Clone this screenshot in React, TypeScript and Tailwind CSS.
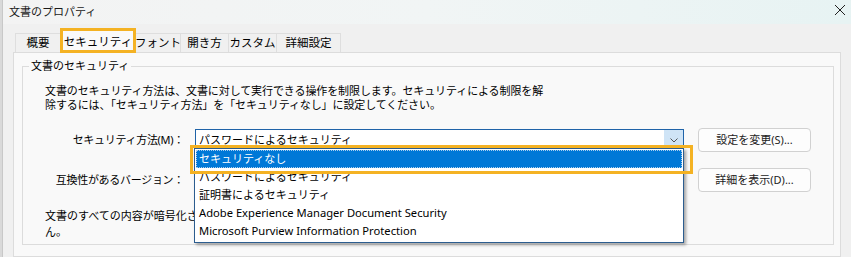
import React from "react";

const FONT = { fontFamily: '"Noto Sans", "Noto Sans CJK JP", sans-serif' };

function Tab({ label, w, selected }: { label: string; w: number; selected?: boolean }) {
  if (selected) {
    return (
      <div
        className="h-[24px] -mb-[1px] -ml-[1px] flex items-center justify-center whitespace-nowrap border border-b-0 border-[#d9d9d9] bg-[#f9f9f9] text-[11.5px] text-black relative z-10"
        style={{ width: w }}
      >
        {label}
      </div>
    );
  }
  return (
    <div
      className="h-[19px] flex items-center justify-center whitespace-nowrap border border-b-0 border-[#dedede] bg-[#f0f0f0] text-[11.5px] text-black -ml-[1px]"
      style={{ width: w }}
    >
      {label}
    </div>
  );
}

function Button({ label }: { label: string }) {
  return (
    <div className="w-[113px] h-[24px] ml-[14px] flex items-center justify-center rounded-[4px] border border-[#d1d1d1] bg-[#fdfdfd] text-[11px] text-[#1b1b1b]">
      {label}
    </div>
  );
}

export default function App() {
  return (
    <div
      className="relative w-[851px] h-[257px] overflow-hidden bg-[#f0f0f0] flex text-black"
      style={FONT}
    >
      {/* left edge of background window */}
      <div className="w-[3px] h-full bg-[#d9d9d9] border-r border-[#c8c8c8]" />

      <div className="flex-1 flex flex-col">
        {/* title bar */}
        <div className="h-[24px] flex items-center justify-between bg-linear-to-r from-[#f3f3f3] via-[#f1f5f5] to-[#e7f3f3] pl-[6px] pr-[5px]">
          <span className="text-[11px] text-[#1a1a1a]">文書のプロパティ</span>
          <svg width="12" height="12" viewBox="0 0 12 12" className="mt-[-4px]">
            <path d="M1 1 L11 11 M11 1 L1 11" stroke="#202020" strokeWidth="1" fill="none" />
          </svg>
        </div>

        {/* tabs */}
        <div className="mt-[4px] ml-[13px] h-[24px] flex items-end relative z-10">
          <Tab label="概要" w={46} />
          <Tab label="セキュリティ" w={76} selected />
          <Tab label="フォント" w={46} />
          <Tab label="開き方" w={49} />
          <Tab label="カスタム" w={49} />
          <Tab label="詳細設定" w={65} />
        </div>

        {/* tab panel */}
        <div className="ml-[10px] w-[828px] flex-1 border border-[#dcdcdc] bg-[#f9f9f9] pl-[8px] pt-[13px]">
          {/* group box */}
          <div className="relative w-[812px] h-[179px] border border-[#dcdcdc] pl-[22px] pt-[17px]">
            <div className="absolute left-[6px] top-[-9px] px-[2px] bg-[#f9f9f9] text-[11px] leading-[16px]">
              文書のセキュリティ
            </div>

            <p className="text-[11px] leading-[14px] tracking-[-0.1px]">
              文書のセキュリティ方法は、文書に対して実行できる操作を制限します。セキュリティによる制限を解
              <br />
              除するには、「セキュリティ方法」を「セキュリティなし」に設定してください。
            </p>

            {/* row 1 */}
            <div className="mt-[16px] flex items-center h-[24px]">
              <div className="w-[139px] text-right text-[11px] tracking-[-0.3px]">セキュリティ方法(M)：</div>
              <div className="ml-[11px] w-[489px] h-[22px] border border-[#1f63a8] bg-white flex items-center justify-between">
                <span className="pl-[3px] text-[11px]">パスワードによるセキュリティ</span>
                <div className="w-[19px] h-full bg-[#cfe4f6] flex items-center justify-center">
                  <svg width="8" height="5" viewBox="0 0 8 5">
                    <path d="M0.5 0.5 L4 4 L7.5 0.5" stroke="#555" strokeWidth="1" fill="none" />
                  </svg>
                </div>
              </div>
              <Button label="設定を変更(S)..." />
            </div>

            {/* row 2 */}
            <div className="mt-[16px] flex items-center h-[24px]">
              <div className="w-[139px] text-right text-[11px] tracking-[-0.3px]">互換性があるバージョン：</div>
              <div className="ml-[11px] w-[489px] h-[22px] border border-[#bcbcbc] bg-white" />
              <Button label="詳細を表示(D)..." />
            </div>

            {/* row 3 (partly covered by the open list) */}
            <div className="mt-[16px] w-[149px] overflow-hidden whitespace-nowrap text-[11px] leading-[16px]">
              <div>文書のすべての内容が暗号化され、検索エンジンは文書のメタデータにアクセスできませ</div>
              <div>ん。</div>
            </div>
          </div>
        </div>
      </div>

      {/* dropdown list (open combobox) */}
      <div className="absolute left-[194px] top-[148px] w-[490px] h-[95px] bg-white border border-[#2c5d8f] shadow-[2px_2px_3px_rgba(0,0,0,0.35)] p-[1px] flex flex-col z-20">
        <div className="h-[18px] bg-[#0078d7] text-white border border-dotted border-[#a8cdef] flex items-center pl-[2px] text-[11px]">
          セキュリティなし
        </div>
        <div className="h-[18px] flex items-center pl-[3px] text-[11px]">パスワードによるセキュリティ</div>
        <div className="h-[18px] flex items-center pl-[3px] text-[11px]">証明書によるセキュリティ</div>
        <div className="h-[18px] flex items-center pl-[3px] text-[11.2px]">Adobe Experience Manager Document Security</div>
        <div className="h-[18px] flex items-center pl-[3px] text-[11.2px]">Microsoft Purview Information Protection</div>
      </div>

      {/* annotation boxes */}
      <div className="absolute left-[60px] top-[28px] w-[76px] h-[25px] border-[3px] border-[#f4b223] z-30" />
      <div className="absolute left-[190px] top-[145px] w-[503px] h-[29px] border-[3px] border-[#f4b223] z-30" />
    </div>
  );
}
